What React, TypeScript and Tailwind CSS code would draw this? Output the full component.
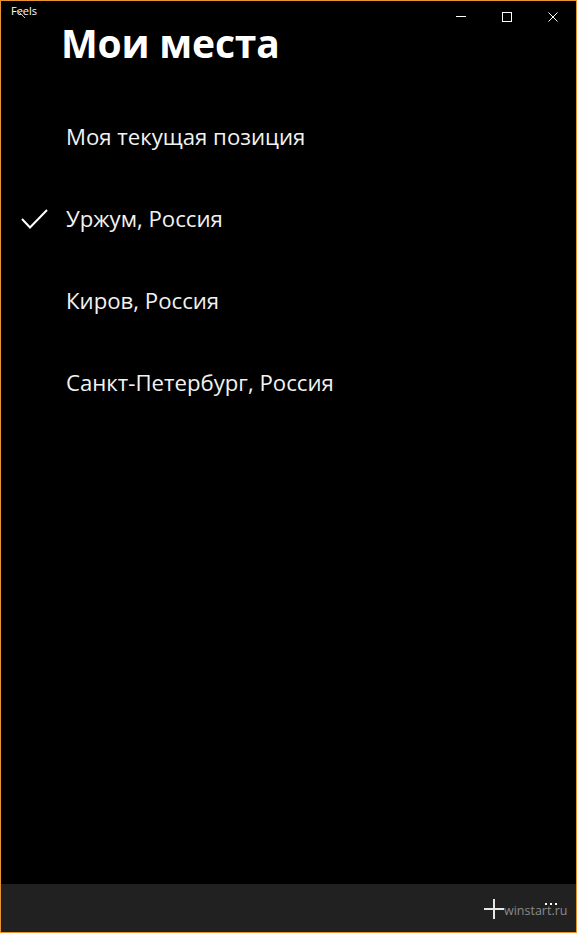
const rows = ['Моя текущая позиция', 'Уржум, Россия', 'Киров, Россия', 'Санкт-Петербург, Россия'];

export default function App() {
  return (
    <div
      className="w-[577px] h-[933px] bg-black border border-[#e8932f] flex flex-col overflow-hidden text-white"
      style={{ fontFamily: '"Open Sans", "Noto Sans", sans-serif' }}
    >
      <div className="relative h-[14px] shrink-0">
        <span className="absolute left-[10px] top-[4px] text-[11px] leading-none">Feels</span>
        <svg className="absolute left-[15px] top-[8px]" width="12" height="10" viewBox="0 0 12 10">
          <path d="M1 1 L9 9" stroke="#bbb" strokeWidth="1" fill="none" />
        </svg>
        <div className="absolute right-0 top-0 flex">
          <div className="w-[46px] h-[31px] flex items-center justify-center">
            <div className="w-[10px] h-px bg-white" />
          </div>
          <div className="w-[46px] h-[31px] flex items-center justify-center">
            <div className="w-[10px] h-[10px] border border-white" />
          </div>
          <div className="w-[46px] h-[31px] flex items-center justify-center">
            <svg width="10" height="10" viewBox="0 0 10 10">
              <path d="M0.5 0.5 L9.5 9.5 M9.5 0.5 L0.5 9.5" stroke="white" strokeWidth="1" />
            </svg>
          </div>
        </div>
      </div>
      <h1 className="pl-[60px] text-[39px] font-bold leading-[56px] tracking-[-0.2px]">Мои места</h1>
      <div className="flex flex-col pt-[25px]">
        {rows.map((r, i) => (
          <div key={r} className="h-[82px] flex items-center relative">
            {i === 1 && (
              <svg className="absolute left-[20px]" width="27" height="20" viewBox="0 0 27 20">
                <path d="M1 10 L9 18.5 L26 1" stroke="white" strokeWidth="2" fill="none" />
              </svg>
            )}
            <span className="pl-[65px] text-[22.2px] text-[#f2f2f2]">{r}</span>
          </div>
        ))}
      </div>
      <div className="flex-1" />
      <div className="h-[48px] shrink-0 bg-[#212121] relative">
        <svg className="absolute left-[483px] top-[15px]" width="20" height="20" viewBox="0 0 20 20">
          <path d="M10 0 V20 M0 10 H20" stroke="#e6e6e6" strokeWidth="2" />
        </svg>
        <div className="absolute left-[544px] top-[19px] flex gap-[3px]">
          <div className="w-[2px] h-[2px] bg-white" />
          <div className="w-[2px] h-[2px] bg-white" />
          <div className="w-[2px] h-[2px] bg-white" />
        </div>
        <span className="absolute left-[503px] top-[21px] text-[12.5px] leading-none text-[#8a8a8a]">winstart.ru</span>
      </div>
    </div>
  );
}
